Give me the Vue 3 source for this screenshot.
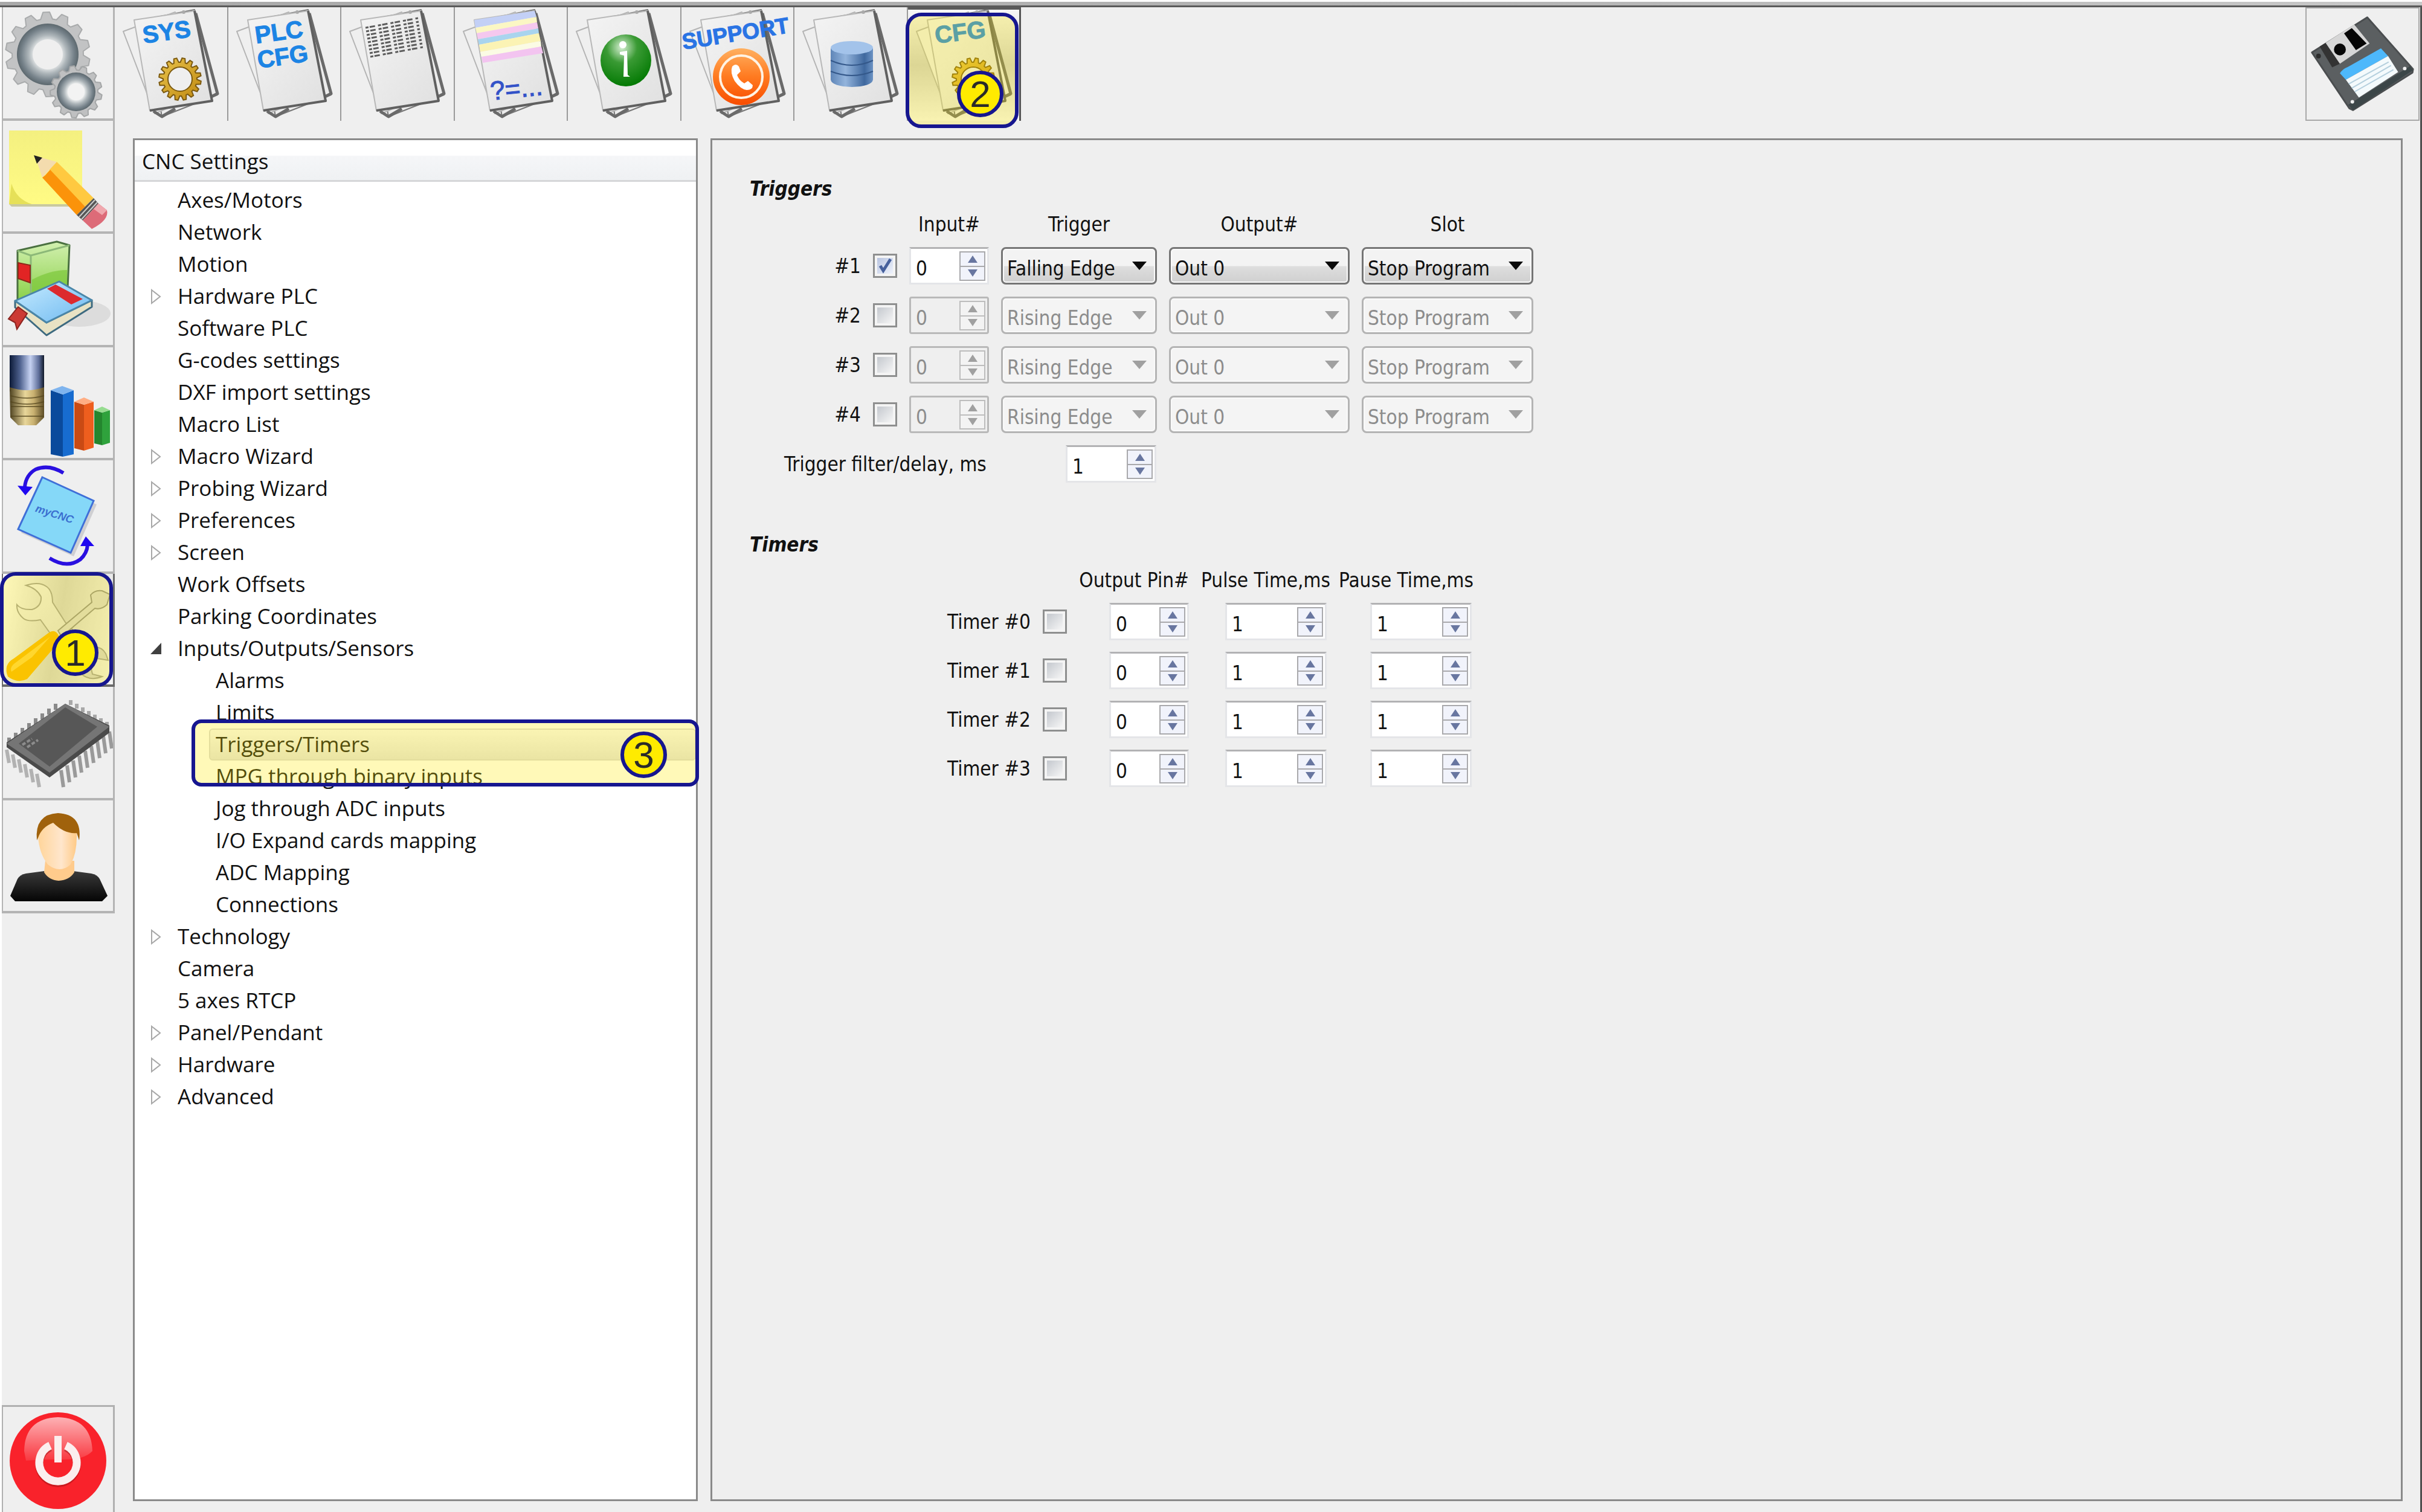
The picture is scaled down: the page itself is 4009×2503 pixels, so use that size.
<script setup>
import { reactive, ref } from 'vue'

const tools = ['sys', 'plc', 'list', 'vars', 'info', 'support', 'db', 'cfg']
const toolNames = {
  sys: 'System', plc: 'PLC config', list: 'Listing', vars: 'Variables',
  info: 'Information', support: 'Support', db: 'Database', cfg: 'Config',
}
const modes = ['gears', 'notes', 'books', 'bars', 'rotate', 'tools', 'chip', 'user']

const selected = ref('Triggers/Timers')
const tree = [
  { name: 'Axes/Motors' },
  { name: 'Network' },
  { name: 'Motion' },
  { name: 'Hardware PLC', closed: true },
  { name: 'Software PLC' },
  { name: 'G-codes settings' },
  { name: 'DXF import settings' },
  { name: 'Macro List' },
  { name: 'Macro Wizard', closed: true },
  { name: 'Probing Wizard', closed: true },
  { name: 'Preferences', closed: true },
  { name: 'Screen', closed: true },
  { name: 'Work Offsets' },
  { name: 'Parking Coordinates' },
  {
    name: 'Inputs/Outputs/Sensors',
    children: [
      'Alarms', 'Limits', 'Triggers/Timers', 'MPG through binary inputs',
      'Jog through ADC inputs', 'I/O Expand cards mapping', 'ADC Mapping', 'Connections',
    ],
  },
  { name: 'Technology', closed: true },
  { name: 'Camera' },
  { name: '5 axes RTCP' },
  { name: 'Panel/Pendant', closed: true },
  { name: 'Hardware', closed: true },
  { name: 'Advanced', closed: true },
]

const triggers = reactive([
  { on: true, input: 0, edge: 'Falling Edge', out: 'Out 0', slot: 'Stop Program' },
  { on: false, input: 0, edge: 'Rising Edge', out: 'Out 0', slot: 'Stop Program' },
  { on: false, input: 0, edge: 'Rising Edge', out: 'Out 0', slot: 'Stop Program' },
  { on: false, input: 0, edge: 'Rising Edge', out: 'Out 0', slot: 'Stop Program' },
])
const delay = reactive({ ms: 1 })
const timers = reactive([0, 1, 2, 3].map(() => ({ on: false, pin: 0, pulse: 1, pause: 1 })))
const step = (row, key, by) => { row[key] = Math.max(0, row[key] + by) }

// outline of a toothed wheel
function gear(cx, cy, outer, inner, teeth) {
  const pts = []
  const a = (Math.PI * 2) / teeth
  for (let i = 0; i < teeth; i++) {
    for (const [k, r] of [[0.05, inner], [0.25, outer], [0.6, outer], [0.8, inner]]) {
      const t = (i + k) * a
      pts.push(`${(cx + r * Math.cos(t)).toFixed(1)},${(cy + r * Math.sin(t)).toFixed(1)}`)
    }
  }
  return pts.join(' ')
}
const range = (n) => Array.from({ length: n }, (_, i) => i)
</script>

<template>
  <div class="app">
    <svg class="defs" aria-hidden="true">
      <defs>
        <linearGradient id="gPaper" x1="0" y1="0" x2="1" y2="1"><stop offset="0" stop-color="#f4f4f4" /><stop offset="1" stop-color="#e0e0e0" /></linearGradient>
        <linearGradient id="gGold" x1="0" y1="0" x2="1" y2="1"><stop offset="0" stop-color="#e8c24a" /><stop offset="1" stop-color="#c08a12" /></linearGradient>
        <radialGradient id="gInfo" cx=".42" cy=".25" r=".75"><stop offset="0" stop-color="#d8f0d4" /><stop offset=".4" stop-color="#3a9a34" /><stop offset="1" stop-color="#047a04" /></radialGradient>
        <linearGradient id="gOrange" x1="0" y1="0" x2="0" y2="1"><stop offset="0" stop-color="#ffb060" /><stop offset=".5" stop-color="#ff7a20" /><stop offset="1" stop-color="#f84c00" /></linearGradient>
        <linearGradient id="gDb" x1="0" y1="0" x2="1" y2="0"><stop offset="0" stop-color="#5f86b8" /><stop offset=".35" stop-color="#93b4dc" /><stop offset=".8" stop-color="#3f689e" /><stop offset="1" stop-color="#6c93c4" /></linearGradient>
        <radialGradient id="gRing"><stop offset=".42" stop-color="#eef0f0" /><stop offset=".62" stop-color="#aeb6ba" /><stop offset=".85" stop-color="#76828a" /><stop offset="1" stop-color="#5c686e" /></radialGradient>
        <linearGradient id="gNote" x1="0" y1="0" x2="0" y2="1"><stop offset="0" stop-color="#f4f080" /><stop offset="1" stop-color="#fffb84" /></linearGradient>
        <linearGradient id="gGreen" x1="0" y1="0" x2="0" y2="1"><stop offset="0" stop-color="#d2f0b0" /><stop offset="1" stop-color="#8ad048" /></linearGradient>
        <linearGradient id="gBlueBook" x1="0" y1="0" x2="1" y2="1"><stop offset="0" stop-color="#c8ecff" /><stop offset="1" stop-color="#6cb8f0" /></linearGradient>
        <linearGradient id="gSteel" x1="0" y1="0" x2="1" y2="0"><stop offset="0" stop-color="#0c1a38" /><stop offset=".3" stop-color="#4e618e" /><stop offset=".6" stop-color="#c6d2f2" /><stop offset=".85" stop-color="#5c6c98" /><stop offset="1" stop-color="#101828" /></linearGradient>
        <linearGradient id="gBrass" x1="0" y1="0" x2="1" y2="0"><stop offset="0" stop-color="#4e4220" /><stop offset=".45" stop-color="#e8d69a" /><stop offset=".7" stop-color="#c8b070" /><stop offset="1" stop-color="#5c4c26" /></linearGradient>
        <linearGradient id="gWrench" x1="0" y1="0" x2="1" y2="1"><stop offset="0" stop-color="#f4f4f4" /><stop offset="1" stop-color="#cfcfcf" /></linearGradient>
        <linearGradient id="gFace" x1="0" y1="0" x2="1" y2="0"><stop offset="0" stop-color="#ffd59a" /><stop offset=".6" stop-color="#ffe6cc" /><stop offset="1" stop-color="#ffca86" /></linearGradient>
        <linearGradient id="gShirt" x1="0" y1="0" x2="0" y2="1"><stop offset="0" stop-color="#3a3a3a" /><stop offset="1" stop-color="#050505" /></linearGradient>
        <linearGradient id="gGloss" x1="0" y1="0" x2="0" y2="1"><stop offset="0" stop-color="#fff" stop-opacity=".65" /><stop offset="1" stop-color="#fff" stop-opacity=".1" /></linearGradient>
      </defs>
    </svg>

    <div class="strip"></div>
    <div class="body">
      <nav class="side" aria-label="Modes">
        <ul class="modes">
          <li v-for="m in modes" :key="m">
            <button type="button" class="mode" :class="{ pressed: m === 'tools' }" :aria-label="m">
              <svg viewBox="0 0 187 187">
                <g v-if="m === 'gears'">
                  <polygon :points="gear(76, 78, 70, 59, 14)" fill="#c2c3c4" stroke="#a9abac" stroke-width="2" stroke-linejoin="round" />
                  <circle cx="76" cy="78" r="51" fill="url(#gRing)" />
                  <circle cx="76" cy="78" r="25" fill="#efefef" />
                  <polygon :points="gear(123, 140, 43, 36, 13)" fill="#bfc0c1" stroke="#a4a6a7" stroke-width="2" stroke-linejoin="round" />
                  <circle cx="123" cy="140" r="32" fill="url(#gRing)" />
                  <circle cx="123" cy="140" r="14" fill="#f3f3f3" />
                </g>
                <g v-else-if="m === 'notes'">
                  <path d="M12 138H134V142H16z" fill="#c9c9a0" />
                  <rect x="12" y="16" width="121" height="122" fill="url(#gNote)" />
                  <path d="M16 104Q24 130 50 138H12z" fill="#e6e058" />
                  <polygon points="55,58 91,68 67,94" fill="#f4dcae" />
                  <polygon points="53,57 67,61 58,71" fill="#222" />
                  <polygon points="91,68 152,128 138,142 79,81" fill="#ffc940" />
                  <polygon points="67,94 72,90 80,81 138,142 124,156" fill="#fb930a" />
                  <polygon points="152,128 160,137 134,165 124,156" fill="#555" />
                  <path d="M154 131L128 159M158 135L132 163" stroke="#ccc" stroke-width="2" />
                  <path d="M160 137L174 148Q178 164 149 179L134 165z" fill="#dd6b78" />
                  <path d="M160 137L174 148L166 156L152 146z" fill="#f0a8ae" />
                </g>
                <g v-else-if="m === 'books'">
                  <ellipse cx="128" cy="132" rx="52" ry="22" fill="#dcdcdc" />
                  <path d="M26 28L91 13L112 19L109 90L26 112z" fill="url(#gGreen)" stroke="#4a7040" stroke-width="3" stroke-linejoin="round" />
                  <path d="M26 28L48 36L112 19M48 36V100" fill="none" stroke="#8cb878" stroke-width="3" />
                  <path d="M50 76Q80 60 108 60V88L50 100z" fill="#7cc83a" opacity=".7" />
                  <path d="M27 48L47 52V81L27 74z" fill="#e22424" stroke="#8c2a1a" stroke-width="2" />
                  <path d="M22 111L74 147L149 110V121L74 168L22 122z" fill="#e8e2c4" stroke="#3d6a80" stroke-width="3" stroke-linejoin="round" />
                  <path d="M22 111L95 79L149 110L74 147z" fill="url(#gBlueBook)" stroke="#4a86a8" stroke-width="3" stroke-linejoin="round" />
                  <path d="M75 91L89 84L134 108L115 117z" fill="#dc2a2e" />
                  <path d="M27 121L42 132L25 158L22 147L11 141z" fill="#cc3a34" stroke="#8c2420" stroke-width="2" />
                </g>
                <g v-else-if="m === 'bars'">
                  <rect x="13" y="13" width="57" height="60" fill="url(#gSteel)" />
                  <path d="M13 66Q42 76 70 66V116L57 129H27L14 116z" fill="url(#gBrass)" />
                  <path d="M14 80Q42 88 70 80M14 90Q42 98 70 90M15 98H69M15 114H69" fill="none" stroke="#54461e" stroke-width="2" opacity=".7" />
                  <polygon points="81,71 101,78 101,181 81,177" fill="#0a4a9c" />
                  <polygon points="101,78 119,71 119,177 101,181" fill="#176cd0" />
                  <polygon points="81,71 100,64 119,71 101,78" fill="#7fb4ee" />
                  <polygon points="120,90 136,95 136,171 120,167" fill="#c94a14" />
                  <polygon points="136,95 152,90 152,166 136,171" fill="#ee5e1e" />
                  <polygon points="120,90 136,83 152,90 136,95" fill="#ffae84" />
                  <polygon points="153,104 166,108 166,162 153,159" fill="#24862e" />
                  <polygon points="166,108 179,104 179,158 166,162" fill="#2fa23c" />
                  <polygon points="153,104 166,98 179,104 166,108" fill="#96dc90" />
                </g>
                <g v-else-if="m === 'rotate'">
                  <path d="M72 34L157 73L119 159L32 120z" fill="#cfcfd2" />
                  <path d="M67 28L152 67L114 153L27 114z" fill="#85d8f8" stroke="#3f6fd8" stroke-width="3" />
                  <text x="87" y="95" transform="rotate(18 87 90)" text-anchor="middle" class="logo">myCNC</text>
                  <path d="M102 21Q78 6 56 15Q40 24 38 44" fill="none" stroke="#2a10e0" stroke-width="6" />
                  <polygon points="26,42 51,44 39,58" fill="#2008f0" />
                  <path d="M79 162Q108 180 130 164Q141 154 142 140" fill="none" stroke="#2a10e0" stroke-width="6" />
                  <polygon points="139,126 130,142 153,142" fill="#2008f0" />
                </g>
                <g v-else-if="m === 'tools'">
                  <path d="M40 19Q62 12 74 21Q84 28 84 47L105 80L146 122Q164 118 172 132L176 143L158 140L146 148L150 166L166 170Q146 178 132 166L124 148L79 97L64 76Q44 80 36 74Q24 64 25 51Q32 60 50 59Q66 54 65 38Q58 24 40 19z" fill="url(#gWrench)" stroke="#9c9c9c" stroke-width="2" />
                  <path d="M93 94L149 47L147 35Q154 26 166 28L179 34L174 51Q164 60 154 57L99 104z" fill="#d9d9d9" stroke="#8c8c8c" stroke-width="2" />
                  <path d="M77 98Q88 90 94 102Q100 110 90 118L42 174Q26 182 10 170Q2 150 20 140z" fill="#f8b400" />
                  <path d="M80 104L24 146Q12 154 16 162L50 138z" fill="#ffd040" />
                </g>
                <g v-else-if="m === 'chip'">
                  <g stroke="#9a9a9a" stroke-width="6">
                    <path v-for="i in range(8)" :key="'a' + i" :d="`M${12 + i * 11} ${94 - i * 8}v-10`" stroke="#8a8a8a" />
                    <path v-for="i in range(7)" :key="'b' + i" :d="`M${114 + i * 10} ${30 + i * 6}v-8`" stroke="#a8a8a8" />
                    <path v-for="i in range(6)" :key="'c' + i" :d="`M${8 + i * 10} ${104 + i * 8}l4 22`" stroke="#b2b2b2" />
                    <path v-for="i in range(9)" :key="'d' + i" :d="`M${98 + i * 10} ${138 - i * 8}l4 28`" />
                  </g>
                  <polygon points="105,28 178,64 178,76 79,150 8,100 8,92" fill="#4a4a4a" />
                  <polygon points="105,28 178,66 79,142 8,94" fill="#757575" />
                  <polygon points="105,34 158,66 79,132 28,94" fill="#575757" />
                  <path d="M34 96L50 86M42 100L60 88" stroke="#8c8c8c" stroke-width="4" stroke-dasharray="6 3" />
                </g>
                <g v-else>
                  <path d="M14 158L26 130Q30 123 40 121L70 117H118L148 121Q158 123 162 130L175 158L166 167H22z" fill="url(#gShirt)" />
                  <path d="M72 100H120V119Q112 132 94 133Q78 132 70 119z" fill="#ffcb8c" />
                  <path d="M60 60Q60 30 93 28Q126 30 124 60Q124 88 114 106Q96 122 76 106Q62 88 60 60z" fill="url(#gFace)" />
                  <path d="M58 66Q54 23 93 21Q134 23 128 66L124 54Q104 56 85 37Q66 44 60 62z" fill="#a0620c" />
                </g>
              </svg>
            </button>
            <div v-if="m === 'tools'" class="mark mark-side"><span class="badge">1</span></div>
          </li>
        </ul>
        <button type="button" class="power" aria-label="Power off">
          <svg viewBox="0 0 187 187">
            <circle cx="93" cy="92" r="80" fill="#f9222b" />
            <path d="M37 76Q38 22 93 20Q148 22 150 76Q136 92 93 90Q60 90 40 92z" fill="url(#gGloss)" />
            <path d="M80 70A31 31 0 1 0 106 70" fill="none" stroke="#a01014" stroke-width="13" opacity=".5" />
            <path d="M80 67A31 31 0 1 0 106 67" fill="none" stroke="#fbeeee" stroke-width="13" />
            <rect x="87" y="51" width="12" height="44" fill="#fbeeee" />
          </svg>
        </button>
      </nav>

      <div class="main">
        <header class="top">
          <div class="toolbar" role="toolbar" aria-label="Settings pages">
            <div v-for="t in tools" :key="t" class="slot">
              <button type="button" class="tool" :class="{ pressed: t === 'cfg' }" :aria-label="toolNames[t]">
                <svg viewBox="0 0 188 188">
                  <g stroke-linejoin="round">
                    <path d="M50 20L132 4L170 145L78 181z" fill="#ececec" stroke="#777" stroke-width="2" />
                    <path d="M14 40L100 8L152 140L66 176z" fill="#efefef" stroke="#b4b4b4" stroke-width="2" />
                    <path d="M64 172L78 181L100 168M134 10L170 143L160 148" fill="none" stroke="#6a6a6a" stroke-width="5" />
                    <path d="M32 21L132 6L161 155L58 171z" fill="url(#gPaper)" stroke="#b8b8b8" stroke-width="2" />
                    <path d="M132 6L161 155L58 171" fill="none" stroke="#606060" stroke-width="4" />
                    <circle cx="114" cy="8" r="3" fill="#aaa" />
                  </g>
                  <g v-if="t === 'sys' || t === 'cfg'">
                    <text v-if="t === 'sys'" x="48" y="60" transform="rotate(-8 48 60)" class="tag">SYS</text>
                    <text v-else x="46" y="60" transform="rotate(-7 46 60)" class="tag">CFG</text>
                    <polygon :points="gear(108, 119, 35, 28, 16)" fill="url(#gGold)" stroke="#7c5a10" stroke-width="2" />
                    <circle cx="108" cy="119" r="20" fill="#efefef" stroke="#7c5a10" stroke-width="2" />
                  </g>
                  <g v-else-if="t === 'plc'">
                    <text x="46" y="60" transform="rotate(-8 46 60)" class="tag">PLC</text>
                    <text x="50" y="101" transform="rotate(-8 50 101)" class="tag">CFG</text>
                  </g>
                  <g v-else-if="t === 'list'" stroke="#5c5c5c" stroke-width="3">
                    <path v-for="i in range(9)" :key="i" :d="`M${40 + i} ${34 + i * 6}L${127 + i} ${18 + i * 6}`" stroke-dasharray="5 2 9 5" />
                  </g>
                  <g v-else-if="t === 'vars'">
                    <polygon points="32,21 132,6 135,16 34,34" fill="#c3d0f6" />
                    <polygon points="34,34 135,16 136,25 36,43" fill="#fbf7c4" />
                    <polygon points="36,43 136,25 138,35 38,53" fill="#f5c8ee" />
                    <polygon points="38,53 138,35 139,43 40,62" fill="#a9d4ee" />
                    <polygon points="40,62 139,43 142,56 42,74" fill="#fbf3b4" />
                    <polygon points="42,74 142,56 143,65 44,82" fill="#fbfbe4" />
                    <polygon points="44,82 143,65 146,76 46,92" fill="#f3c4f0" />
                    <text x="60" y="154" transform="rotate(-6 60 154)" class="formula">?=...</text>
                  </g>
                  <g v-else-if="t === 'info'">
                    <ellipse cx="96" cy="88" rx="42" ry="43" fill="url(#gInfo)" />
                    <circle cx="91" cy="62" r="6" fill="#fff" />
                    <path d="M86 74L98 72L99 112L103 115H92L93 80L86 78z" fill="#fff" />
                  </g>
                  <g v-else-if="t === 'support'">
                    <text x="3" y="70" transform="rotate(-9 3 70)" class="tag wide">SUPPORT</text>
                    <circle cx="99" cy="115" r="47" fill="url(#gOrange)" />
                    <circle cx="99" cy="115" r="35" fill="none" stroke="#fff3e4" stroke-width="4" />
                    <path d="M84 98Q90 92 95 98L98 106L92 112Q95 121 104 126L110 122L118 129Q118 137 108 137Q98 136 88 122Q80 108 84 98z" fill="#fff" />
                  </g>
                  <g v-else>
                    <path d="M60 68V120Q62 131 95 132Q128 131 130 120V68z" fill="url(#gDb)" />
                    <ellipse cx="95" cy="67" rx="35" ry="11" fill="#a3c3ea" />
                    <path d="M60 88Q95 104 130 88M60 106Q95 120 130 106" fill="none" stroke="#34588a" stroke-width="2" />
                  </g>
                </svg>
              </button>
              <div v-if="t === 'cfg'" class="mark mark-top"><span class="badge">2</span></div>
            </div>
          </div>
          <button type="button" class="save" aria-label="Save">
            <svg viewBox="0 0 188 188">
              <path d="M9 74L102 15L179 102L178 108L78 171L72 168z" fill="#5b5f61" stroke="#4b4e50" stroke-width="3" stroke-linejoin="round" />
              <path d="M179 104L78 171L70 162L174 97z" fill="#3c4648" />
              <path d="M22 64L32 58L56 93L43 99z" fill="#333" />
              <path d="M32 58L80 27L106 59L56 93z" fill="#d6d6d6" />
              <path d="M63 42L76 33L101 59L83 70z" fill="#060606" />
              <circle cx="56" cy="69" r="10" fill="#060606" />
              <path d="M56 109Q60 102 70 98L125 67L137 80L66 120z" fill="#4db8fb" />
              <path d="M66 120L137 80L154 107L88 150z" fill="#f4fafc" />
              <path d="M71 127L138 90M76 134L142 96M81 140L146 103" stroke="#b4cfdd" stroke-width="2" />
              <circle cx="20" cy="80" r="4" fill="#2d2d2d" />
              <circle cx="165" cy="101" r="3" fill="#eee" /><circle cx="77" cy="157" r="3" fill="#eee" />
            </svg>
          </button>
        </header>

        <div class="panels">
          <section class="tree" aria-labelledby="tree-title">
            <h2 id="tree-title">CNC Settings</h2>
            <ul>
              <li v-for="n in tree" :key="n.name">
                <button type="button" class="item">
                  <span class="twist">
                    <svg v-if="n.closed" viewBox="0 0 18 26"><path d="M2 2V24L16 13z" fill="#fff" stroke="#a8a8a8" stroke-width="2" /></svg>
                    <svg v-else-if="n.children" viewBox="0 0 18 26"><path d="M18 3V22H0z" fill="#404040" /></svg>
                  </span>
                  <span class="name">{{ n.name }}</span>
                </button>
                <ul v-if="n.children">
                  <li v-for="c in n.children" :key="c">
                    <button type="button" class="item" :class="{ selected: c === selected }" @click="selected = c">
                      <span class="twist"></span>
                      <span class="name">{{ c }}</span>
                    </button>
                    <div v-if="c === 'Triggers/Timers'" class="mark mark-tree"><span class="badge">3</span></div>
                  </li>
                </ul>
              </li>
            </ul>
          </section>

          <form class="settings" @submit.prevent>
            <h3>Triggers</h3>
            <div class="grid trig head">
              <span class="c3">Input#</span><span>Trigger</span><span>Output#</span><span>Slot</span>
            </div>
            <div v-for="(t, i) in triggers" :key="i" class="grid trig">
              <label class="lab" :for="'trg' + i">#{{ i + 1 }}</label>
              <span class="check">
                <input :id="'trg' + i" v-model="t.on" type="checkbox" />
                <svg v-if="t.on" viewBox="0 0 40 40"><path d="M12 20L17 28L29 9" fill="none" stroke="#46609c" stroke-width="5" /></svg>
              </span>
              <span class="spin" :class="{ off: !t.on }">
                <input v-model.number="t.input" type="number" :disabled="!t.on" :aria-label="'Input for trigger ' + (i + 1)" />
                <span class="steps">
                  <button type="button" aria-label="Up" :disabled="!t.on" @click="step(t, 'input', 1)"><svg viewBox="0 0 16 12"><path d="M8 0L16 12H0z" /></svg></button>
                  <button type="button" aria-label="Down" :disabled="!t.on" @click="step(t, 'input', -1)"><svg viewBox="0 0 16 12"><path d="M0 0H16L8 12z" /></svg></button>
                </span>
              </span>
              <span class="combo" :class="{ off: !t.on }">
                <select v-model="t.edge" :disabled="!t.on" :aria-label="'Edge for trigger ' + (i + 1)"><option>Falling Edge</option><option>Rising Edge</option></select>
                <svg viewBox="0 0 24 14"><path d="M0 0H24L12 14z" /></svg>
              </span>
              <span class="combo" :class="{ off: !t.on }">
                <select v-model="t.out" :disabled="!t.on" :aria-label="'Output for trigger ' + (i + 1)"><option>Out 0</option></select>
                <svg viewBox="0 0 24 14"><path d="M0 0H24L12 14z" /></svg>
              </span>
              <span class="combo" :class="{ off: !t.on }">
                <select v-model="t.slot" :disabled="!t.on" :aria-label="'Slot for trigger ' + (i + 1)"><option>Stop Program</option></select>
                <svg viewBox="0 0 24 14"><path d="M0 0H24L12 14z" /></svg>
              </span>
            </div>
            <div class="filter">
              <label for="delay">Trigger filter/delay, ms</label>
              <span class="spin">
                <input id="delay" v-model.number="delay.ms" type="number" />
                <span class="steps">
                  <button type="button" aria-label="Up" @click="step(delay, 'ms', 1)"><svg viewBox="0 0 16 12"><path d="M8 0L16 12H0z" /></svg></button>
                  <button type="button" aria-label="Down" @click="step(delay, 'ms', -1)"><svg viewBox="0 0 16 12"><path d="M0 0H16L8 12z" /></svg></button>
                </span>
              </span>
            </div>

            <h3 class="second">Timers</h3>
            <div class="grid tim head">
              <span class="c3">Output Pin#</span><span>Pulse Time,ms</span><span>Pause Time,ms</span>
            </div>
            <div v-for="(t, i) in timers" :key="i" class="grid tim">
              <label class="lab" :for="'tim' + i">Timer #{{ i }}</label>
              <span class="check"><input :id="'tim' + i" v-model="t.on" type="checkbox" /></span>
              <span v-for="k in ['pin', 'pulse', 'pause']" :key="k" class="spin" :class="k">
                <input v-model.number="t[k]" type="number" :aria-label="'Timer ' + i + ' ' + k" />
                <span class="steps">
                  <button type="button" aria-label="Up" @click="step(t, k, 1)"><svg viewBox="0 0 16 12"><path d="M8 0L16 12H0z" /></svg></button>
                  <button type="button" aria-label="Down" @click="step(t, k, -1)"><svg viewBox="0 0 16 12"><path d="M0 0H16L8 12z" /></svg></button>
                </span>
              </span>
            </div>
          </form>
        </div>
      </div>
    </div>
  </div>
</template>

<style>
body { background: #efefef; }
</style>

<style scoped>
* { box-sizing: border-box; }
ul { list-style: none; margin: 0; padding: 0; }
button { padding: 0; border: 0; background: none; color: inherit; font: inherit; }
svg { display: block; }
.defs { position: absolute; width: 0; height: 0; }

.app {
  display: flex;
  flex-direction: column;
  height: 100vh;
  overflow: hidden;
  background: #efefef;
  color: #111;
  font-family: "DejaVu Sans Condensed", "DejaVu Sans", sans-serif;
  font-size: 33px;
}
.strip {
  flex: none;
  height: 12px;
  border-top: 3px solid #fff;
  border-bottom: 3px solid #5a5a5a;
  background: linear-gradient(90deg, #a9a9a9, #b4b4b4 60%, #c8c8c8);
}
.body {
  flex: 1;
  min-height: 0;
  display: flex;
  border-left: 3px solid #fff;
  border-right: 3px solid #505050;
}

.side { flex: 0 0 187px; min-width: 0; display: flex; flex-direction: column; justify-content: space-between; }
.modes { display: flex; flex-direction: column; height: 1500px; }
.modes li { flex: 1; min-height: 0; position: relative; }
.mode {
  display: flex;
  align-items: flex-start;
  width: 100%;
  height: 100%;
  border: solid #b4b4b4;
  border-width: 0 3px 4px 2px;
  overflow: hidden;
}
.mode svg { flex: none; width: 187px; height: 187px; margin-left: -2px; }
.mode.pressed {
  border-color: #6a6a6a;
  background: linear-gradient(100deg, #fff, #d2d2d2 50%, #f4f4f4);
}
.power {
  display: flex;
  align-items: flex-start;
  height: 177px;
  overflow: hidden;
  border: solid #b0b0b0;
  border-width: 3px 3px 0 2px;
}
.power svg { flex: none; width: 187px; height: 187px; margin: -3px 0 0 -2px; }

.main { flex: 1; min-width: 0; display: flex; flex-direction: column; }
.top { flex: none; display: flex; justify-content: space-between; height: 188px; padding-right: 1px; }
.toolbar { display: flex; width: 1500px; }
.slot { flex: 1; min-width: 0; position: relative; }
.tool { display: flex; align-items: flex-start; width: 100%; height: 100%; border-right: 2px solid #9a9a9a; }
.tool svg { flex: none; width: 188px; height: 188px; overflow: visible; }
.tool.pressed {
  border-right: 3px solid #555;
  border-top: 4px solid #5a5a5a;
  background: linear-gradient(#f6f6f6, #cfcfcf 50%, #f6f6f6);
}
.tool.pressed svg { margin-top: -4px; }
.save { width: 189px; border: 2px solid #a8a8a8; }
.save svg { width: 185px; height: 185px; }
.tag { font: bold 40px "Liberation Sans", sans-serif; fill: #1c84e4; stroke: #1c84e4; stroke-width: 1px; }
.tag.wide { font-size: 37px; fill: #2a74e4; stroke: #2a74e4; }
.formula { font: 44px "Liberation Sans", sans-serif; fill: #3352c8; stroke: #3352c8; stroke-width: 1px; }
.logo { font: italic bold 18px "Liberation Sans", sans-serif; fill: #3a6fd0; }

.panels { flex: 1; min-height: 0; display: flex; gap: 21px; padding: 29px 29px 18px 30px; }
.tree { flex: 0 0 935px; border: 3px solid #8a8a8a; background: #fff; font-family: "Open Sans", "Noto Sans", sans-serif; font-size: 35px; }
.tree h2 {
  height: 69px;
  margin: 0 0 4px;
  padding-left: 12px;
  border-bottom: 3px solid #d5d6d8;
  background: linear-gradient(#fff 38%, #f5f6f8 40%, #eff1f3);
  font-size: 35px;
  font-weight: 400;
  line-height: 69px;
}
.tree li { position: relative; }
.tree ul ul { padding-left: 63px; }
.item { display: flex; align-items: center; width: 100%; height: 53px; padding-left: 26px; text-align: left; }
.twist { flex: 0 0 34px; }
.twist svg { width: 18px; height: 26px; }
.name { flex: 1; height: 53px; padding-left: 9px; border: 2px solid transparent; border-radius: 6px; line-height: 47px; }
.selected .name { border-color: #d9d9d9; background: linear-gradient(#f8f8f8, #e3e3e3); }

.mark {
  position: absolute;
  z-index: 2;
  border: 6px solid #16168f;
  border-radius: 26px;
  background: rgba(255, 235, 0, 0.28);
  pointer-events: none;
}
.mark-side { inset: -3px 3px 0 -3px; }
.mark-top { inset: 9px 4px -12px -4px; }
.mark-tree { inset: -15px -5px -43px 31px; border-radius: 16px; }
.badge {
  position: absolute;
  display: flex;
  align-items: center;
  justify-content: center;
  width: 77px;
  height: 77px;
  border: 6px solid #16168f;
  border-radius: 50%;
  background: #ffeb00;
  color: #2a2a2a;
  font: 62px "Liberation Sans", sans-serif;
}
.mark-side .badge { right: 18px; bottom: 12px; }
.mark-top .badge { right: 19px; bottom: 12px; }
.mark-tree .badge { right: 47px; bottom: 8px; }

.settings { flex: 1; min-width: 0; padding: 57px 62px; border: 3px solid #8a8a8a; white-space: nowrap; }
.settings h3 { margin: 0; font-size: 33px; font-style: italic; font-weight: 700; line-height: 48px; }
.settings h3.second { margin-top: 79px; }
.grid { display: grid; column-gap: 20px; align-items: center; height: 62px; margin-bottom: 20px; }
.tim { margin-bottom: 19px; }
.trig { grid-template-columns: 184px 40px 132px 258px 299px 284px; }
.tim { grid-template-columns: 465px 40px 182px 208px 220px; }
.head { height: 40px; margin: 14px 0 18px; }
.head .c3 { grid-column: 3; }
.trig.head { text-align: center; }
.tim.head { text-align: right; }
.lab { text-align: right; }

.check { display: grid; width: 40px; height: 40px; }
.check > * { grid-area: 1 / 1; }
.check input {
  appearance: none;
  width: 40px;
  height: 40px;
  margin: 0;
  padding: 4px;
  border: 3px solid #8e8f8f;
  background: linear-gradient(135deg, #c4c8ce, #f6f6f6) content-box, #f4f4f4;
}
.check input:checked { background: linear-gradient(135deg, #b8c4e0, #eef2fc) content-box, #f4f4f4; }
.check svg { width: 40px; height: 40px; pointer-events: none; }

.spin {
  display: flex;
  width: 100%;
  height: 62px;
  padding: 4px 3px 3px 0;
  border: 3px solid #e4e5e8;
  border-top-color: #b2b2b4;
  background: #fff;
}
.spin.off { border-color: #b9b9b9; border-radius: 4px; background: #efefef; }
.spin.pin { width: 132px; justify-self: end; }
.spin.pulse, .spin.pause { width: 168px; justify-self: end; }
.spin input {
  appearance: textfield;
  flex: 1;
  min-width: 0;
  padding: 8px 0 0 8px;
  border: 0;
  outline: 0;
  background: none;
  color: #111;
  font: inherit;
}
.spin input:disabled { color: #8c8c8c; }
.spin input::-webkit-inner-spin-button { appearance: none; margin: 0; }
.steps { flex: 0 0 43px; display: flex; flex-direction: column; border: 2px solid #a9a9ac; background: #f1f3fb; }
.steps button { flex: 1; display: flex; align-items: center; justify-content: center; }
.steps button + button { border-top: 2px solid #a9a9ac; }
.steps svg { width: 16px; height: 12px; fill: #6876a0; }
.off .steps { background: #f3f3f3; border-color: #bdbdbd; }
.off .steps button + button { border-color: #bdbdbd; }
.off .steps svg { fill: #a0a0a0; }

.combo { display: grid; align-items: center; height: 62px; }
.combo > * { grid-area: 1 / 1; }
.combo select {
  appearance: none;
  width: 100%;
  height: 62px;
  padding: 8px 40px 0 7px;
  border: 3px solid #757575;
  border-radius: 8px;
  background: linear-gradient(#f3f3f3 50%, #dedede 52%, #cfcfcf);
  box-shadow: inset 0 0 0 2px #fafafa;
  color: #111;
  font: inherit;
}
.combo.off select { border-color: #b4b4b4; background: #f4f4f4; color: #8c8c8c; opacity: 1; }
.combo svg { justify-self: end; width: 24px; height: 14px; margin-right: 17px; fill: #0a0a0a; pointer-events: none; }
.combo.off svg { fill: #a0a0a0; }

.filter { display: flex; align-items: center; height: 62px; padding-left: 57px; }
.filter label { flex: 0 0 466px; }
.filter .spin { width: 150px; }
</style>
